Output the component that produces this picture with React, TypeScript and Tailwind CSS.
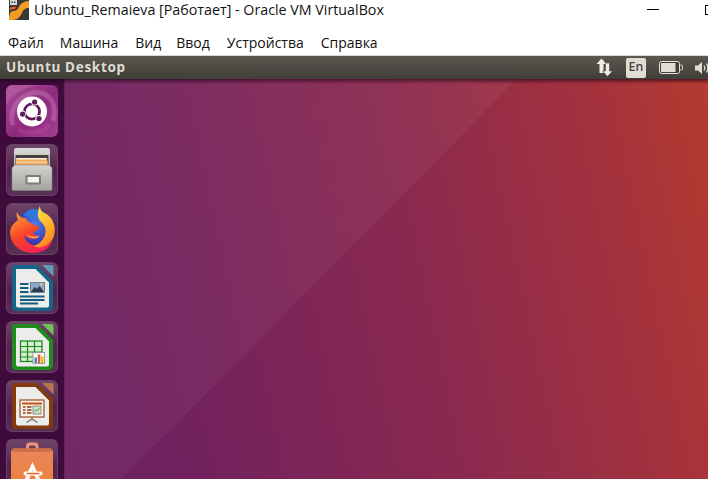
import React from "react";

const Tile = ({ children, kind = "plain" }: { children: React.ReactNode; kind?: "plain" | "dash" }) => (
  <div
    className={
      kind === "dash"
        ? "relative w-[52px] h-[52px] shrink-0 rounded-[6px] overflow-hidden bg-[linear-gradient(135deg,#a84a96,#8f2a7e_55%,#a43f94)]"
        : "relative w-[52px] h-[52px] shrink-0 rounded-[6px] overflow-hidden border border-[#664362] bg-[linear-gradient(180deg,#6f4469,#50214c_55%,#593055)]"
    }
  >
    {children}
  </div>
);

const Ico = ({ children, plain }: { children: React.ReactNode; plain?: boolean }) => (
  <svg
    width="52"
    height="52"
    viewBox="0 0 52 52"
    className={plain ? "absolute left-0 top-0" : "absolute left-[-1px] top-[-1px]"}
  >
    {children}
  </svg>
);

const UbuntuIcon = () => (
  <Ico plain>
    <path d="M0 20C8 6 24 0 40 0H0Z" fill="#c878b6" opacity=".35" />
    <path d="M7 40C1 20 20 5 35 8C46 11 51 22 47 36" fill="none" stroke="#d9a3ce" strokeWidth="5" opacity=".3" />
    <path d="M12 44C22 50 36 48 44 40" fill="none" stroke="#c064ae" strokeWidth="4" opacity=".25" />
    <circle cx="26" cy="26.500" r="15" fill="#fff" />
    <circle cx="26" cy="26.500" r="7.600" fill="none" stroke="#5e1a5a" strokeWidth="2.800" />
    <circle cx="28.600" cy="16.800" r="3.600" fill="#fff" />
    <circle cx="16.300" cy="29.100" r="3.600" fill="#fff" />
    <circle cx="33" cy="33.500" r="3.600" fill="#fff" />
    <circle cx="28.600" cy="17.100" r="2.600" fill="#5e1a5a" />
    <circle cx="16.600" cy="29.100" r="2.600" fill="#5e1a5a" />
    <circle cx="33" cy="33.500" r="2.600" fill="#5e1a5a" />
  </Ico>
);

const FilesIcon = () => (
  <Ico>
    <defs>
      <linearGradient id="fc" x1="0" y1="0" x2="0" y2="1">
        <stop offset="0" stopColor="#d2d2ce" />
        <stop offset="1" stopColor="#a2a29e" />
      </linearGradient>
      <linearGradient id="ft" x1="0" y1="0" x2="0" y2="1">
        <stop offset="0" stopColor="#dadad6" />
        <stop offset="1" stopColor="#8f8f8b" />
      </linearGradient>
    </defs>
    <path d="M8 6Q8 4 10 4H42Q44 4 44 6V42H8Z" fill="url(#ft)" />
    <rect x="9.500" y="11" width="33" height="11" fill="#45433f" />
    <path d="M10 14H41L42 22H10Z" fill="#f2a85a" />
    <path d="M10.500 14H40.500V15.500H10.500Z" fill="#fbf3e2" />
    <path d="M10 17.500H41.500V19H10Z" fill="#f7d29c" />
    <path d="M9 21H43L46 23.500V45Q46 46.500 44.500 46.500H7.500Q6 46.500 6 45V23.500Z" fill="url(#fc)" stroke="#8a8a86" strokeWidth=".6" />
    <rect x="19.500" y="31" width="15.500" height="9.500" rx="1" fill="#7c7c78" />
    <rect x="21.500" y="33" width="11.500" height="5.500" fill="#f4f4f2" />
  </Ico>
);

const FirefoxIcon = () => (
  <Ico>
    <defs>
      <linearGradient id="ff" x1="0.2" y1="0" x2="0.7" y2="1">
        <stop offset="0" stopColor="#ff9b2e" />
        <stop offset=".5" stopColor="#f7432b" />
        <stop offset="1" stopColor="#f31f5a" />
      </linearGradient>
      <linearGradient id="fy" x1="0" y1="0" x2="0.4" y2="1">
        <stop offset="0" stopColor="#ffe94e" />
        <stop offset=".6" stopColor="#ffb62e" />
        <stop offset="1" stopColor="#ff8a20" />
      </linearGradient>
      <radialGradient id="fb" cx=".55" cy=".4" r=".6">
        <stop offset="0" stopColor="#4b7fe8" />
        <stop offset="1" stopColor="#3a2ca8" />
      </radialGradient>
    </defs>
    <circle cx="27" cy="25" r="18" fill="url(#fb)" />
    <path d="M27 6C33 6 37 8 40 12L30 16C26 15 21 14 18 12C20 8 24 6 27 6Z" fill="#2f77dd" />
    <path d="M11 9C10 12 11 15 12 17C8 20 4 24 4 29C4 41 14 50 27 50C37 50 44 45 47 37C43 42 37 44 31 43C24 42 19 38 18 33C24 37 30 37 34 33C30 33 27 31 27 29C32 28 33 25 33 23C29 23 27 21 25 20C22 19 21 18 20 15C17 16 13 14 11 9Z" fill="url(#ff)" />
    <path d="M34 3C31 9 31 14 34 18C38 21 41 26 39 32C37 38 32 42 27 43C35 47 45 42 48 33C51 22 45 12 38 10C36 9 34 7 34 3Z" fill="url(#fy)" />
    <path d="M20 31C24 34 30 35 34 32C32 36 25 37 20 31Z" fill="#ffd24a" opacity=".8" />
  </Ico>
);

const docTile = (rim: string, corner: string, children: React.ReactNode) => (
  <Ico>
    <path d="M6 5.500Q6 3 8.500 3H31L47 19V44Q47 49 42 49H10Q6 49 6 45Z" fill={rim} />
    <path d="M36 3H45Q47.500 3 47.500 5.500V14.500Z" fill={corner} />
    <path d="M10 7H29.500L43 20.500V43.500Q43 45.500 41 45.500H12Q10 45.500 10 43.500Z" fill="#ecedeb" />
    {children}
  </Ico>
);

const WriterIcon = () =>
  docTile(
    "#17648a",
    "#5e9cb8",
    <>
      <path d="M14 22H22.500M14 26H22.500M14 30H22.500" stroke="#155a82" strokeWidth="1.800" />
      <rect x="24.500" y="20.500" width="14" height="10" fill="#8aa6c8" stroke="#3a5878" strokeWidth=".6" />
      <path d="M25 30L28.500 25L31 27L33.500 24L38 30Z" fill="#2e3a4a" />
      <circle cx="35.500" cy="22.500" r="1.200" fill="#f0d060" />
      <path d="M14 34.500H38.500M14 38H38.500M14 41.500H32" stroke="#155a82" strokeWidth="1.800" />
    </>
  );

const CalcIcon = () =>
  docTile(
    "#1f8c1b",
    "#71c255",
    <>
      <rect x="14.500" y="20" width="21.500" height="20.500" fill="#d8ecd2" stroke="#1d8a1d" strokeWidth="1.300" />
      <path d="M14.500 25.500H36M14.500 31H36M14.500 36H36M21.500 20V40.500M28.500 20V40.500" stroke="#1d8a1d" strokeWidth="1.200" />
      <rect x="27" y="31.500" width="11.500" height="11" fill="#fbfbfb" stroke="#8b8b8b" strokeWidth=".8" />
      <rect x="28.500" y="36.500" width="2.500" height="5.500" fill="#2f8ed8" />
      <rect x="31.800" y="33.500" width="2.500" height="8.500" fill="#e8641c" />
      <rect x="35" y="35.500" width="2.500" height="6.500" fill="#f0b41c" />
    </>
  );

const ImpressIcon = () =>
  docTile(
    "#843a0f",
    "#b9744e",
    <>
      <rect x="14" y="20" width="24" height="17" fill="#f8f2ea" stroke="#a0481c" strokeWidth="1.200" />
      <rect x="16" y="22.500" width="20" height="2" fill="#c24f18" />
      <path d="M17 27H19.500M17 30H19.500M17 33H19.500" stroke="#8a3d10" strokeWidth="1.600" />
      <path d="M21 27H25.500M21 30H25.500M21 33H25.500" stroke="#8a3d10" strokeWidth="1.600" />
      <rect x="27" y="26" width="8" height="8" fill="#cfe0c4" stroke="#666" strokeWidth=".7" />
      <path d="M27.800 32L30 29.800L31.500 30.800L33.800 27.800" fill="none" stroke="#3a9a3a" strokeWidth=".9" />
      <path d="M26 37V39M26 39L20.500 42.500M26 39L31.500 42.500" stroke="#77736f" strokeWidth="1.400" fill="none" />
    </>
  );

const SoftwareIcon = () => (
  <Ico>
    <defs>
      <linearGradient id="bag" x1="0" y1="0" x2="0" y2="1">
        <stop offset="0" stopColor="#e8875a" />
        <stop offset="1" stopColor="#f07f3a" />
      </linearGradient>
    </defs>
    <path d="M21.500 12V7.500Q21.500 5 24 5H28.500Q31 5 31 7.500V12" fill="none" stroke="#e89a78" strokeWidth="3" />
    <path d="M7 9.500H45L47 12V53H5V12Z" fill="url(#bag)" />
    <path d="M7 9.500H45L46.500 13H5.500Z" fill="#cf6f47" />
    <path d="M26.500 23L17.500 43H22L26.500 31L31 43H35.500Z" fill="#fff" />
    <rect x="17.500" y="32.500" width="19" height="4" rx="2" fill="#fff" />
    <rect x="20.500" y="33.800" width="13" height="1.500" fill="#e8641c" />
  </Ico>
);

const NetIcon = () => (
  <svg width="17" height="19" viewBox="0 0 17 19">
    <path d="M5.500 0.500L10.500 6H7.500V15H3.500V6H0.500Z" fill="#efece6" />
    <path d="M11.500 18.500L16.500 13H13.500V5H9.500V13H6.500Z" fill="#efece6" stroke="#4b4a43" strokeWidth=".6" />
  </svg>
);

const BatteryIcon = () => (
  <svg width="24" height="13" viewBox="0 0 24 13">
    <rect x=".5" y=".5" width="20" height="12" rx="2" fill="#3f3e38" stroke="#e8e5de" />
    <rect x="2" y="2" width="14.500" height="9" fill="#e0dcd2" />
    <path d="M21.500 4H22Q23.500 4 23.500 5.500V7.500Q23.500 9 22 9H21.500" fill="none" stroke="#e8e5de" />
  </svg>
);

const SpeakerIcon = () => (
  <svg width="14" height="14" viewBox="0 0 14 14" className="shrink-0">
    <path d="M0 4.500H3L7 1V13L3 9.500H0Z" fill="#dfdcd4" />
    <path d="M9 4.500Q10.500 7 9 9.500M11.500 2.500Q14 7 11.500 11.500" fill="none" stroke="#dfdcd4" strokeWidth="1.300" />
  </svg>
);

export default function App() {
  const menus = [
    { label: "Файл", cls: "" },
    { label: "Машина", cls: "-ml-px" },
    { label: "Вид", cls: "" },
    { label: "Ввод", cls: "-ml-[2px]" },
    { label: "Устройства", cls: "" },
    { label: "Справка", cls: "" },
  ];
  return (
    <div className="w-[708px] h-[479px] overflow-hidden bg-white flex flex-col font-['Open_Sans','Noto_Sans',sans-serif]">
      <div className="relative h-[28px] shrink-0 flex items-start pl-[9px]">
        <svg width="20" height="20" viewBox="0 0 20 20" className="shrink-0">
          <rect width="20" height="20" fill="#3a3835" />
          <rect x="1" y="0" width="7" height="5" fill="#d9d9d9" />
          <rect x="2.500" y="1.500" width="1.500" height="1.500" fill="#444" />
          <rect x="5" y="1.500" width="1.500" height="1.500" fill="#444" />
          <path d="M0 19C0 13 2 11 5 11C9 11 9 7 12 4C14 2 17 1 20 1V8C16 8 14 10 13 13C11 17 8 20 4 20H0Z" fill="#f59a23" />
          <path d="M1 8Q4 6 7 7L6 9Q3 9 1 10Z" fill="#e8641c" />
        </svg>
        <span className="ml-[5px] text-[14.27px] leading-[20px] text-[#111] whitespace-nowrap">
          Ubuntu_Remaieva [Работает] - Oracle VM VirtualBox
        </span>
        <div className="absolute left-[647px] top-[9px] w-[12px] h-px bg-black" />
        <div className="absolute left-[705px] top-[5px] w-[10px] h-[10px] border border-black" />
      </div>
      <div className="h-[27px] shrink-0 flex items-center gap-[17px] pl-[8px] text-[14px] text-[#111] pt-[1px]">
        {menus.map((m) => (
          <span key={m.label} className={`whitespace-nowrap ${m.cls}`}>
            {m.label}
          </span>
        ))}
      </div>
      <div className="h-[24px] shrink-0 flex items-center bg-[linear-gradient(180deg,#5a5850,#3f3e38)] border-t border-[#d9d8d4]">
        <span className="pl-[6px] pb-[1px] text-[13.5px] font-bold tracking-[0.67px] text-[#dfdbd2] font-['Noto_Sans',sans-serif] whitespace-nowrap">
          Ubuntu Desktop
        </span>
        <div className="ml-auto flex items-center">
          <NetIcon />
          <div className="ml-[13px] w-[20px] h-[20px] rounded-[2px] bg-[#e0ddd5] flex items-center justify-center text-[12.5px] font-medium text-[#3f3e38] font-['Noto_Sans',sans-serif]">
            En
          </div>
          <div className="ml-[13px] flex">
            <BatteryIcon />
          </div>
          <div className="ml-[12px] w-[13px] overflow-hidden flex">
            <SpeakerIcon />
          </div>
        </div>
      </div>
      <div className="relative flex-1 min-h-0 flex bg-[linear-gradient(78deg,#6a1f63_0%,#6f215f_22%,#8a2950_58%,#a4323d_85%,#b53b2f_100%)]">
        <svg className="absolute inset-0" width="708" height="400" viewBox="0 0 708 400">
          <polygon points="65,0 517,0 122,400 65,400" fill="#ffffff" opacity="0.045" />
        </svg>
        <div className="relative w-[65px] h-full shrink-0 bg-[#3f0b3c] border-r border-[#5a2a57] flex flex-col gap-[7px] pl-[6px] pt-[6px] overflow-hidden">
          <Tile kind="dash">
            <UbuntuIcon />
          </Tile>
          <Tile>
            <FilesIcon />
          </Tile>
          <Tile>
            <FirefoxIcon />
          </Tile>
          <Tile>
            <WriterIcon />
          </Tile>
          <Tile>
            <CalcIcon />
          </Tile>
          <Tile>
            <ImpressIcon />
          </Tile>
          <Tile>
            <SoftwareIcon />
          </Tile>
        </div>
        <div className="absolute left-0 right-0 top-0 h-[5px] bg-[linear-gradient(180deg,rgba(30,0,20,0.6),rgba(30,0,20,0))]" />
      </div>
    </div>
  );
}
